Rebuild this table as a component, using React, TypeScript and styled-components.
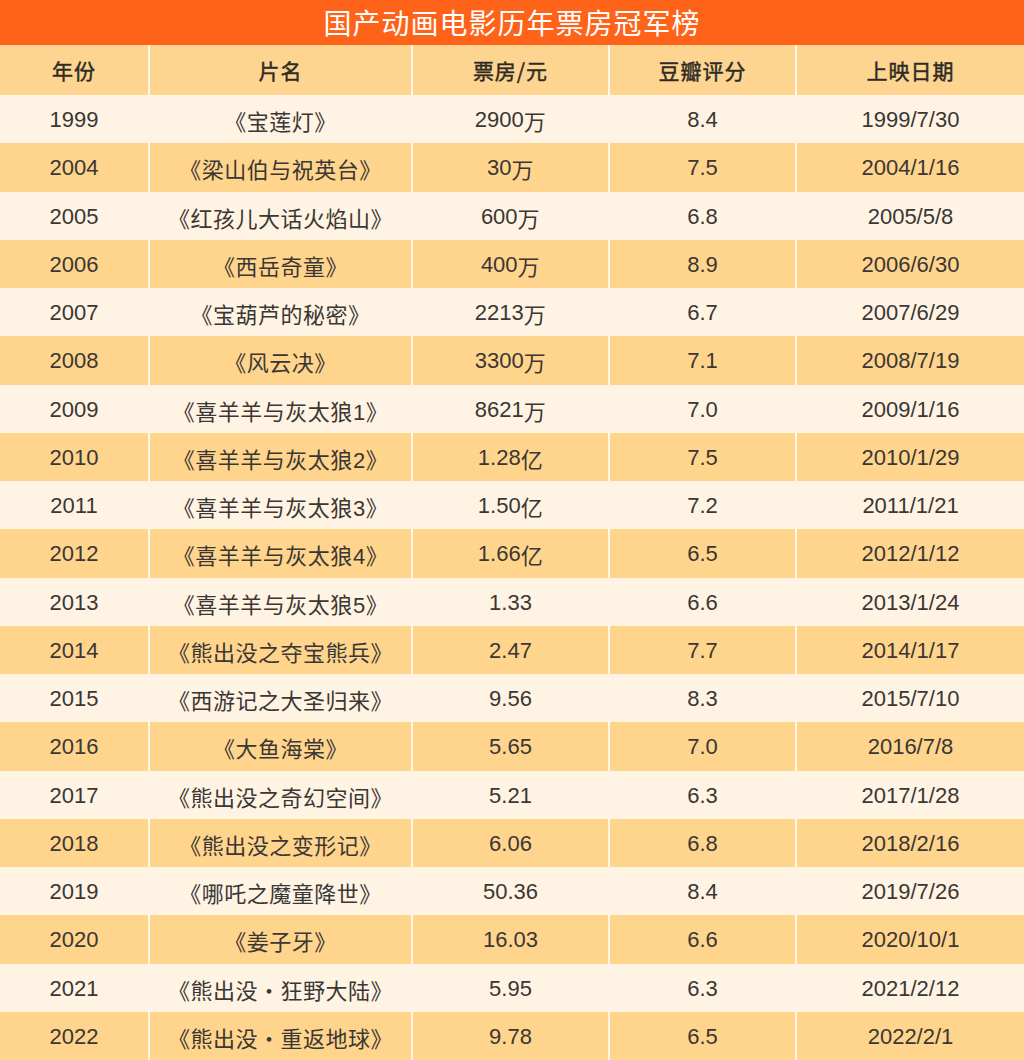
import React from "react";
import styled, { createGlobalStyle } from "styled-components";

const GlobalStyle = createGlobalStyle`
  html, body {
    margin: 0;
    padding: 0;
    background: #ffffff;
  }
  body {
    font-family: "Liberation Sans", "Noto Sans CJK SC", sans-serif;
  }
`;

const Page = styled.div`
  width: 1024px;
  height: 1060px;
  display: flex;
  flex-direction: column;
  overflow: hidden;
`;

const TitleBar = styled.div`
  height: 45px;
  flex: none;
  background: #ff6219;
  color: #ffffff;
  display: flex;
  align-items: center;
  justify-content: center;
  font-family: "Noto Sans CJK SC", sans-serif;
  font-size: 28px;
  letter-spacing: 1px;
  padding-bottom: 1px;
  box-sizing: border-box;
`;

const COLS = "148px 261px 195px 185px 227px";

const HeaderRow = styled.div`
  height: 50px;
  flex: none;
  display: grid;
  grid-template-columns: ${COLS};
  column-gap: 2px;
  background: #fff6ea;
`;

const HeaderCell = styled.div`
  background: #fed590;
  display: flex;
  align-items: center;
  justify-content: center;
  font-family: "Noto Sans CJK SC", sans-serif;
  font-weight: 400;
  -webkit-text-stroke: 0.45px #2e2a26;
  font-size: 21px;
  color: #2e2a26;
  letter-spacing: 1px;
`;

const Row = styled.div<{ $dark: boolean }>`
  flex: 1 1 0;
  display: grid;
  grid-template-columns: ${COLS};
  column-gap: 2px;
  background: ${(p) => (p.$dark ? "#fff6e8" : "#fff3e4")};
`;

const Cell = styled.div<{ $dark: boolean }>`
  background: ${(p) => (p.$dark ? "#ffd48c" : "#fff3e4")};
  display: flex;
  align-items: center;
  justify-content: center;
  padding-top: 2px;
  font-family: "Liberation Sans", "Noto Sans CJK SC", sans-serif;
  font-size: 22px;
  color: #3a3734;
  white-space: nowrap;
`;

const Name = styled.span`
  font-family: "Noto Sans CJK SC", sans-serif;
  font-size: 22px;
  letter-spacing: 0.5px;
`;

const Digit = styled.span`
  font-family: "Liberation Sans", sans-serif;
`;

type Movie = [string, string, string, string, string];

const data: Movie[] = [
  ["1999", "《宝莲灯》", "2900万", "8.4", "1999/7/30"],
  ["2004", "《梁山伯与祝英台》", "30万", "7.5", "2004/1/16"],
  ["2005", "《红孩儿大话火焰山》", "600万", "6.8", "2005/5/8"],
  ["2006", "《西岳奇童》", "400万", "8.9", "2006/6/30"],
  ["2007", "《宝葫芦的秘密》", "2213万", "6.7", "2007/6/29"],
  ["2008", "《风云决》", "3300万", "7.1", "2008/7/19"],
  ["2009", "《喜羊羊与灰太狼1》", "8621万", "7.0", "2009/1/16"],
  ["2010", "《喜羊羊与灰太狼2》", "1.28亿", "7.5", "2010/1/29"],
  ["2011", "《喜羊羊与灰太狼3》", "1.50亿", "7.2", "2011/1/21"],
  ["2012", "《喜羊羊与灰太狼4》", "1.66亿", "6.5", "2012/1/12"],
  ["2013", "《喜羊羊与灰太狼5》", "1.33", "6.6", "2013/1/24"],
  ["2014", "《熊出没之夺宝熊兵》", "2.47", "7.7", "2014/1/17"],
  ["2015", "《西游记之大圣归来》", "9.56", "8.3", "2015/7/10"],
  ["2016", "《大鱼海棠》", "5.65", "7.0", "2016/7/8"],
  ["2017", "《熊出没之奇幻空间》", "5.21", "6.3", "2017/1/28"],
  ["2018", "《熊出没之变形记》", "6.06", "6.8", "2018/2/16"],
  ["2019", "《哪吒之魔童降世》", "50.36", "8.4", "2019/7/26"],
  ["2020", "《姜子牙》", "16.03", "6.6", "2020/10/1"],
  ["2021", "《熊出没・狂野大陆》", "5.95", "6.3", "2021/2/12"],
  ["2022", "《熊出没・重返地球》", "9.78", "6.5", "2022/2/1"],
];

const renderName = (name: string) => {
  const parts = name.split(/(\d)/);
  return (
    <Name>
      {parts.map((p, i) =>
        /^\d$/.test(p) ? <Digit key={i}>{p}</Digit> : <React.Fragment key={i}>{p}</React.Fragment>
      )}
    </Name>
  );
};

const renderBox = (box: string) => {
  const m = box.match(/^([\d.]+)(.*)$/);
  if (!m) return box;
  return (
    <>
      {m[1]}
      {m[2] && <Name>{m[2]}</Name>}
    </>
  );
};

export default function App() {
  return (
    <>
      <GlobalStyle />
      <Page>
        <TitleBar>国产动画电影历年票房冠军榜</TitleBar>
        <HeaderRow>
          <HeaderCell>年份</HeaderCell>
          <HeaderCell>片名</HeaderCell>
          <HeaderCell>票房/元</HeaderCell>
          <HeaderCell>豆瓣评分</HeaderCell>
          <HeaderCell>上映日期</HeaderCell>
        </HeaderRow>
        {data.map((r, i) => {
          const dark = i % 2 === 1;
          return (
            <Row key={r[0]} $dark={dark}>
              <Cell $dark={dark}>{r[0]}</Cell>
              <Cell $dark={dark}>{renderName(r[1])}</Cell>
              <Cell $dark={dark}>{renderBox(r[2])}</Cell>
              <Cell $dark={dark}>{r[3]}</Cell>
              <Cell $dark={dark}>{r[4]}</Cell>
            </Row>
          );
        })}
      </Page>
    </>
  );
}
